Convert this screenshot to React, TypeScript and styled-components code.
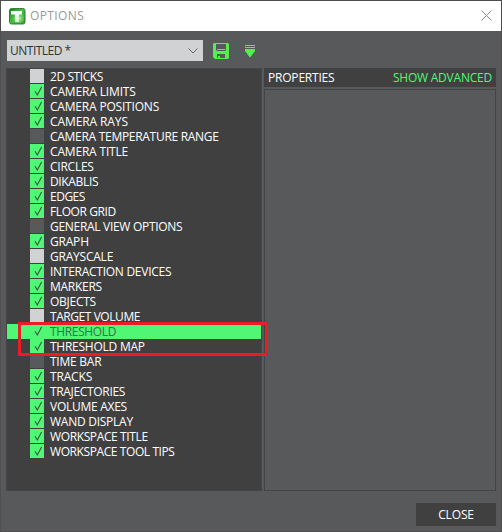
import React from 'react';
import styled, { createGlobalStyle } from 'styled-components';

const GREEN = '#4ff774';
const DARK = '#404041';
const GREY = '#58595b';
const LIGHT = '#d1d2d4';

const GlobalStyle = createGlobalStyle`
  *, *::before, *::after { box-sizing: border-box; }
  body { margin: 0; }
`;

const Dialog = styled.div`
  position: relative;
  width: 502px;
  height: 532px;
  display: flex;
  flex-direction: column;
  border: 1px solid #4f4f51;
  background: ${GREY};
  color: #fff;
  font: 12px/15px "Open Sans", "Noto Sans", sans-serif;
  overflow: hidden;
`;

const TitleBar = styled.header`
  height: 30px;
  flex: none;
  display: flex;
  align-items: center;
  padding: 0 9px 0 8px;
  background: #fff;
  color: #999;
  svg { flex: none; }
`;

const CloseIcon = styled.svg`
  margin-top: -2px;
`;

const Text = styled.span<{ $spacing?: number }>`
  white-space: pre;
  letter-spacing: ${(p) => p.$spacing ?? 0}px;
`;

const Title = styled(Text)`
  flex: 1;
  margin: -1px 0 0 4px;
`;

const Toolbar = styled.div`
  height: 37px;
  flex: none;
  display: flex;
  align-items: center;
  padding: 2px 0 0 6px;
`;

const Select = styled.div`
  width: 196px;
  height: 21px;
  margin-right: 10px;
  display: flex;
  align-items: center;
  justify-content: space-between;
  padding: 0 5px 0 3px;
  background: ${LIGHT};
  color: #333;
`;

const DownIcon = styled.svg`
  margin-left: 16px;
`;

const Panels = styled.main`
  height: 423px;
  flex: none;
  display: grid;
  grid-template-columns: 256px 232px;
  column-gap: 2px;
  margin-left: 5px;
`;

const Tree = styled.ul`
  margin: 0;
  padding: 0;
  list-style: none;
  border: 1px solid #454547;
  background: ${DARK};
`;

const Row = styled.li<{ $selected: boolean }>`
  height: 15px;
  display: flex;
  padding-left: 23px;
  background: ${(p) => (p.$selected ? GREEN : 'transparent')};
  color: ${(p) => (p.$selected ? '#3f6f4b' : '#fff')};
`;

type State = 'on' | 'off' | 'none';
const boxColor: Record<State, string> = { on: GREEN, off: LIGHT, none: GREY };

const Box = styled.span<{ $state: State }>`
  width: 14px;
  height: 14px;
  margin-right: 6px;
  background: ${(p) => boxColor[p.$state]};
  svg { display: block; }
`;

const Side = styled.section`
  display: flex;
  flex-direction: column;
  gap: 2px;
`;

const SideHeader = styled.div`
  height: 19px;
  display: flex;
  align-items: center;
  justify-content: space-between;
  padding: 0 4px;
  background: ${DARK};
`;

const Advanced = styled(Text)`
  color: ${GREEN};
`;

const Properties = styled.div`
  flex: 1;
  border: 1px solid #454547;
`;

const Footer = styled.footer`
  display: flex;
  justify-content: flex-end;
  padding: 12px 5px 0 0;
`;

const CloseButton = styled.button`
  width: 80px;
  height: 23px;
  padding: 0;
  border: 0;
  background: ${DARK};
  color: #fff;
  font: inherit;
  letter-spacing: -0.15px;
`;

const Highlight = styled.div`
  position: absolute;
  left: 17px;
  top: 321px;
  width: 250px;
  height: 34px;
  border: 3px solid #ed1c24;
`;

const items: [string, State, number][] = [
  ['2D STICKS', 'off', -0.42],
  ['CAMERA LIMITS', 'on', -0.15],
  ['CAMERA POSITIONS', 'on', -0.19],
  ['CAMERA RAYS', 'on', -0.1],
  ['CAMERA TEMPERATURE RANGE', 'none', -0.29],
  ['CAMERA TITLE', 'on', -0.18],
  ['CIRCLES', 'on', -0.25],
  ['DIKABLIS', 'on', -0.35],
  ['EDGES', 'on', -0.5],
  ['FLOOR GRID', 'on', -0.4],
  ['GENERAL VIEW OPTIONS', 'none', -0.3],
  ['GRAPH', 'on', -0.2],
  ['GRAYSCALE', 'off', -0.22],
  ['INTERACTION DEVICES', 'on', -0.27],
  ['MARKERS', 'on', -0.27],
  ['OBJECTS', 'on', -0.27],
  ['TARGET VOLUME', 'off', -0.44],
  ['THRESHOLD', 'on', -0.35],
  ['THRESHOLD MAP', 'on', -0.25],
  ['TIME BAR', 'none', -0.25],
  ['TRACKS', 'on', -0.16],
  ['TRAJECTORIES', 'on', -0.33],
  ['VOLUME AXES', 'on', -0.27],
  ['WAND DISPLAY', 'on', -0.26],
  ['WORKSPACE TITLE', 'on', -0.38],
  ['WORKSPACE TOOL TIPS', 'on', -0.41],
];

const Logo = () => (
  <svg width="17" height="17" viewBox="0 0 17 17">
    <defs>
      <linearGradient id="logo" x1="0" y1="0" x2="1" y2="1">
        <stop offset="0" stopColor="#1f7a26" />
        <stop offset=".45" stopColor="#48bd45" />
        <stop offset="1" stopColor="#2c9433" />
      </linearGradient>
      <radialGradient id="shine" cx=".6" cy=".65" r=".5">
        <stop offset="0" stopColor="#b4f0a4" />
        <stop offset="1" stopColor="#a5ec93" stopOpacity="0" />
      </radialGradient>
      <linearGradient id="letter" x1="0" y1="0" x2="0" y2="1">
        <stop offset="0" stopColor="#ffffff" />
        <stop offset="1" stopColor="#dcf8d4" />
      </linearGradient>
    </defs>
    <rect x=".5" y=".5" width="15.5" height="15.5" rx="2" fill="url(#logo)" stroke="#2f8535" />
    <rect x="2" y="2" width="13" height="13" fill="url(#shine)" />
    <path d="M2 3H13V6.5H9.8V14H6V6.5H2Z" fill="url(#letter)" />
  </svg>
);

export default function App() {
  return (
    <>
      <GlobalStyle />
      <Dialog>
        <TitleBar>
          <Logo />
          <Title $spacing={0.4}>OPTIONS</Title>
          <CloseIcon width="11" height="11" viewBox="0 0 11 11">
            <path d="M.5.5l10 10M10.5.5l-10 10" stroke="#8b8b8b" />
          </CloseIcon>
        </TitleBar>
        <Toolbar>
          <Select>
            <Text $spacing={-0.5}>UNTITLED *</Text>
            <svg width="10" height="6" viewBox="0 0 10 6">
              <path d="M.5.5L5 5 9.5.5" fill="none" stroke="#666" />
            </svg>
          </Select>
          <svg width="16" height="16" viewBox="0 0 16 16">
            <path
              fillRule="evenodd"
              fill="#55ee50"
              d="M1 0H15L16 1V15L15 16H2L0 14V1ZM3 1V7L4 8H12L13 7V1ZM4 11V15H5V13H7V15H12V11Z"
            />
            <path d="M4 6.5H12" stroke="#55ee50" />
          </svg>
          <DownIcon width="10" height="12" viewBox="0 0 10 12">
            <path fill="#55ee50" d="M0 0H10V1H0ZM0 2H10V3H0ZM0 4H10V6L5.5 12H4.5L0 6Z" />
          </DownIcon>
        </Toolbar>
        <Panels>
          <Tree>
            {items.map(([label, state, spacing]) => (
              <Row key={label} $selected={label === 'THRESHOLD'}>
                <Box $state={state}>
                  {state === 'on' && (
                    <svg width="14" height="14" viewBox="0 0 14 14">
                      <path d="M5 7.3L7.3 11 11.6 3" fill="none" stroke="#35553d" strokeWidth="1.1" />
                    </svg>
                  )}
                </Box>
                <Text $spacing={spacing}>{label}</Text>
              </Row>
            ))}
          </Tree>
          <Side>
            <SideHeader>
              <Text $spacing={-0.2}>PROPERTIES</Text>
              <Advanced $spacing={-0.22}>SHOW ADVANCED</Advanced>
            </SideHeader>
            <Properties />
          </Side>
        </Panels>
        <Footer>
          <CloseButton>CLOSE</CloseButton>
        </Footer>
        <Highlight />
      </Dialog>
    </>
  );
}
